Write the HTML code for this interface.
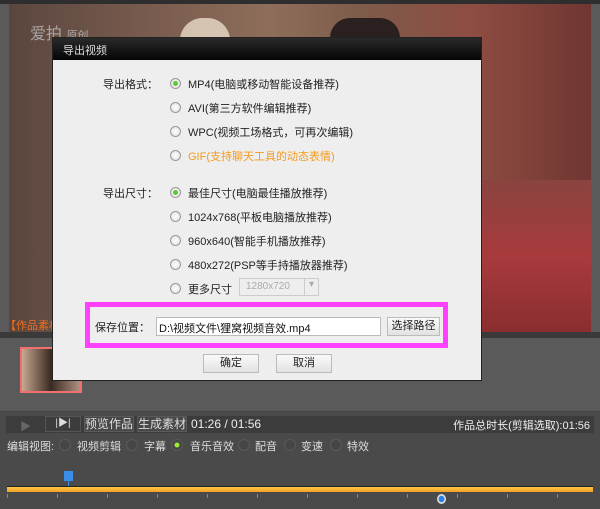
<!DOCTYPE html><html><head><meta charset="utf-8"><style>
*{margin:0;padding:0;box-sizing:border-box}
body{width:600px;height:509px;overflow:hidden;background:#5a5a5a;font-family:"Liberation Sans","Noto Sans CJK SC",sans-serif;font-size:11px;position:relative}
.abs{position:absolute}
.video{left:9px;top:4px;width:582px;height:328px;background:linear-gradient(90deg,#5a463e 0%,#74584c 20%,#8e6e5a 45%,#7e5c4a 60%,#8e4c42 80%,#703632 100%);}
.red{left:420px;top:180px;width:171px;height:152px;background:linear-gradient(180deg,#8a4440,#a83a3c 50%,#8a2e30)}
.dlg{left:52px;top:37px;width:430px;height:344px;background:#eeeeee;border:1px solid #222}
.title{left:0;top:0;width:428px;height:22px;background:linear-gradient(#2a2a2a,#050505);color:#ddd;font-size:11px;padding:4px 0 0 10px}
.lbl{color:#222;font-size:11px}
.rad{width:11px;height:11px;border-radius:50%;border:1px solid #999;background:radial-gradient(#fff,#ddd)}
.rad.on::after{content:"";position:absolute;left:2px;top:2px;width:5px;height:5px;border-radius:50%;background:#5c3}
.opt{font-size:11px;color:#222}
.btn{border:1px solid #bbb;background:linear-gradient(#fafafa,#e2e2e2);font-size:11px;text-align:center;color:#222}
.bar{background:#3c3c3c}
.dr{width:12px;height:12px;border-radius:50%;border:1px solid #5a5a5a;background:#464646}
</style></head><body>
<div class="abs" style="left:0;top:0;width:600px;height:4px;background:#2e2e2e"></div>
<div class="abs video"></div>
<div class="abs red"></div>
<div class="abs" style="left:180px;top:18px;width:50px;height:45px;border-radius:25px;background:#e8dcc8;opacity:.8"></div>
<div class="abs" style="left:330px;top:18px;width:70px;height:40px;border-radius:30px;background:#2a2020"></div>
<div class="abs" style="left:30px;top:20px;color:#bbb;font-size:16px;opacity:.8">爱拍 <span style="font-size:11px">原创</span></div>
<div class="abs" style="left:5px;top:317px;color:#f07020;font-size:11px">【作品素材</div>
<div class="abs" style="left:0;top:332px;width:600px;height:6px;background:#3a3a3a"></div>
<div class="abs" style="left:20px;top:347px;width:62px;height:46px;border:2px solid #f07070;background:linear-gradient(90deg,#c8a890,#3a2a24 50%,#b09080)"></div>
<div class="abs" style="left:0;top:411px;width:600px;height:98px;background:#4a4a4a;border-top:1px solid #444"></div>
<div class="abs bar" style="left:6px;top:416px;width:588px;height:17px"></div>
<div class="abs" style="left:20px;top:418px;color:#666;font-size:11px">▶</div>
<div class="abs" style="left:45px;top:416px;width:36px;height:16px;border:1px solid #555;color:#ddd;text-align:center;font-size:10px;line-height:14px">|▶|</div>
<div class="abs" style="left:84px;top:416px;width:50px;height:16px;border:1px solid #5a5a5a;background:#484848;color:#ddd;text-align:center;line-height:14px;font-size:12px">预览作品</div>
<div class="abs" style="left:137px;top:416px;width:50px;height:16px;border:1px solid #5a5a5a;background:#484848;color:#ddd;text-align:center;line-height:14px;font-size:12px">生成素材</div>
<div class="abs" style="left:191px;top:417px;color:#eee;font-size:12px">01:26 / 01:56</div>
<div class="abs" style="right:10px;top:417px;color:#eee;font-size:11px">作品总时长(剪辑选取):01:56</div>
<div class="abs" style="left:7px;top:438px;color:#ddd;font-size:11px">编辑视图:</div>
<div class="abs dr" style="left:59px;top:439px"></div><div class="abs" style="left:77px;top:438px;color:#ddd">视频剪辑</div>
<div class="abs dr" style="left:126px;top:439px"></div><div class="abs" style="left:144px;top:438px;color:#ddd">字幕</div>
<div class="abs dr" style="left:171px;top:439px;background:radial-gradient(#9e3 30%,#464646 40%)"></div><div class="abs" style="left:190px;top:438px;color:#ddd">音乐音效</div>
<div class="abs dr" style="left:238px;top:439px"></div><div class="abs" style="left:255px;top:438px;color:#ddd">配音</div>
<div class="abs dr" style="left:284px;top:439px"></div><div class="abs" style="left:301px;top:438px;color:#ddd">变速</div>
<div class="abs dr" style="left:330px;top:439px"></div><div class="abs" style="left:347px;top:438px;color:#ddd">特效</div>
<div class="abs" style="left:64px;top:471px;width:9px;height:10px;background:#3a8ee8"></div>
<div class="abs" style="left:68px;top:481px;width:1px;height:5px;background:#3a8ee8"></div>
<div class="abs" style="left:7px;top:486px;width:586px;height:6px;background:linear-gradient(#ffc84a,#f0a020);border-top:1px solid #222"></div>
<div class="abs" style="left:7px;top:494px;width:586px;height:4px;background:repeating-linear-gradient(90deg,#888 0 1px,transparent 1px 50px)"></div>
<div class="abs" style="left:437px;top:494px;width:9px;height:10px;border-radius:50%;background:radial-gradient(#2a7ee8 40%,#ddd 50%)"></div>
<div class="abs dlg">
 <div class="abs title">导出视频</div>
 <div class="abs lbl" style="left:50px;top:38px">导出格式：</div>
 <div class="abs rad on" style="left:117px;top:40px"></div><div class="abs opt" style="left:135px;top:38px">MP4(电脑或移动智能设备推荐)</div>
 <div class="abs rad" style="left:117px;top:64px"></div><div class="abs opt" style="left:135px;top:62px">AVI(第三方软件编辑推荐)</div>
 <div class="abs rad" style="left:117px;top:88px"></div><div class="abs opt" style="left:135px;top:86px">WPC(视频工场格式，可再次编辑)</div>
 <div class="abs rad" style="left:117px;top:112px"></div><div class="abs opt" style="left:135px;top:110px;color:#f39a1e">GIF(支持聊天工具的动态表情)</div>
 <div class="abs lbl" style="left:50px;top:147px">导出尺寸：</div>
 <div class="abs rad on" style="left:117px;top:149px"></div><div class="abs opt" style="left:135px;top:147px">最佳尺寸(电脑最佳播放推荐)</div>
 <div class="abs rad" style="left:117px;top:173px"></div><div class="abs opt" style="left:135px;top:171px">1024x768(平板电脑播放推荐)</div>
 <div class="abs rad" style="left:117px;top:197px"></div><div class="abs opt" style="left:135px;top:195px">960x640(智能手机播放推荐)</div>
 <div class="abs rad" style="left:117px;top:221px"></div><div class="abs opt" style="left:135px;top:219px">480x272(PSP等手持播放器推荐)</div>
 <div class="abs rad" style="left:117px;top:245px"></div><div class="abs opt" style="left:135px;top:243px">更多尺寸</div>
 <div class="abs" style="left:186px;top:240px;width:80px;height:18px;border:1px solid #ccc;background:#eee;color:#aaa;font-size:10px;padding:2px 0 0 6px">1280x720<span style="position:absolute;right:0;top:0;width:14px;height:16px;border-left:1px solid #ccc;text-align:center">▾</span></div>
 <div class="abs" style="left:32px;top:264px;width:363px;height:46px;border:5px solid #ff40ff"></div>
 <div class="abs lbl" style="left:42px;top:281px">保存位置：</div>
 <div class="abs" style="left:103px;top:279px;width:225px;height:19px;border:1px solid #bbb;background:#fff;font-size:11px;padding:2px 0 0 2px;color:#111">D:\视频文件\狸窝视频音效.mp4</div>
 <div class="abs btn" style="left:334px;top:279px;width:53px;height:19px;line-height:17px">选择路径</div>
 <div class="abs btn" style="left:150px;top:316px;width:56px;height:19px;line-height:17px">确定</div>
 <div class="abs btn" style="left:223px;top:316px;width:56px;height:19px;line-height:17px">取消</div>
</div>
</body></html>
